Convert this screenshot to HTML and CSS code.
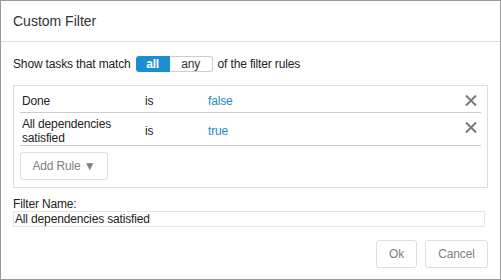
FILE: index.html
```html
<!DOCTYPE html>
<html lang="en">
<head>
  <meta charset="UTF-8">
  <title>Custom Filter</title>
  <link rel="stylesheet" href="styles.css">
</head>
<body>
  <div class="dialog">
    <div class="dialog-head">Custom Filter</div>

    <div class="dialog-body">
      <!-- match mode -->
      <div class="match-row">
        <span>Show tasks that match</span>
        <div class="toggle">
          <span class="seg on">all</span>
          <span class="seg off">any</span>
        </div>
        <span>of the filter rules</span>
      </div>

      <!-- rules -->
      <div class="rules">
        <div class="rule">
          <div class="cell">Done</div>
          <div class="cell">is</div>
          <div class="cell value">false</div>
          <div class="remove">
            <svg width="12" height="11" viewBox="0 0 12 11"><path d="M1 0.5 L11 10.5 M11 0.5 L1 10.5" stroke="#777" stroke-width="2" fill="none"/></svg>
          </div>
        </div>
        <div class="rule">
          <div class="cell">All dependencies satisfied</div>
          <div class="cell">is</div>
          <div class="cell value">true</div>
          <div class="remove">
            <svg width="12" height="11" viewBox="0 0 12 11"><path d="M1 0.5 L11 10.5 M11 0.5 L1 10.5" stroke="#777" stroke-width="2" fill="none"/></svg>
          </div>
        </div>
        <button class="btn add-rule">Add Rule &#9660;</button>
      </div>

      <label class="name-label">Filter Name:</label>
      <div class="name-input">All dependencies satisfied</div>
    </div>

    <div class="dialog-foot">
      <button class="btn">Ok</button>
      <button class="btn">Cancel</button>
    </div>
  </div>
</body>
</html>
```

FILE: styles.css
```css
* { box-sizing: border-box; }
body {
  margin: 0;
  font-family: "Liberation Sans", Arial, sans-serif;
  font-size: 12px;
  letter-spacing: -0.15px;
  color: #222;
  background: #fff;
}

.dialog {
  width: 501px;
  height: 280px;
  border: 1px solid #999;
  display: flex;
  flex-direction: column;
}

.dialog-head {
  height: 41px;
  line-height: 40px;
  padding: 0 12px;
  font-size: 14px;
  letter-spacing: 0;
  color: #333;
  border-bottom: 1px solid #ddd;
}

.dialog-body {
  padding: 14px 12px 0 12px;
}

/* Show tasks that match ... */
.match-row {
  display: flex;
  align-items: center;
  gap: 5px;
  height: 16px;
  line-height: 14px;
}

.toggle {
  display: flex;
  height: 16px;
}

.seg {
  display: flex;
  align-items: center;
  justify-content: center;
  height: 16px;
}

.seg.on {
  width: 34px;
  background: #1a8fd0;
  color: #fff;
  font-weight: bold;
  border-radius: 3px 0 0 3px;
}

.seg.off {
  width: 43px;
  border: 1px solid #ccc;
  border-left: none;
  border-radius: 0 3px 3px 0;
  color: #333;
}

/* rules box */
.rules {
  margin-top: 13px;
  border: 1px solid #ddd;
  padding: 0 6px 7px;
}

.rule {
  display: grid;
  grid-template-columns: 123px 63px 1fr 20px;
  align-items: center;
  min-height: 27px;
  padding: 4px 0 0;
  border-bottom: 1px solid #ccc;
  line-height: 14px;
}

.cell {
  padding: 0 2px;
}

.value {
  color: #1c8dcc;
}

.remove {
  align-self: start;
  margin-top: 5px;
  display: flex;
  justify-content: center;
}

.remove svg {
  display: block;
}

.btn {
  height: 28px;
  padding: 0 12px;
  border: 1px solid #ddd;
  border-radius: 3px;
  background: #fff;
  color: #808080;
  font-family: inherit;
  font-size: 12px;
  letter-spacing: inherit;
}

.add-rule {
  margin-top: 6px;
  width: 88px;
  padding: 0;
}

/* filter name */
.name-label {
  display: block;
  margin-top: 9px;
  line-height: 14px;
}

.name-input {
  width: 472px;
  height: 16px;
  line-height: 14px;
  padding-left: 1px;
  border: 1px solid #e5e5e5;
}

.dialog-foot {
  display: flex;
  justify-content: flex-end;
  gap: 8px;
  padding: 13px 12px 0;
}

.dialog-foot .btn:first-child {
  width: 41px;
  padding: 0;
}

.dialog-foot .btn:last-child {
  width: 63px;
  padding: 0;
}
```
